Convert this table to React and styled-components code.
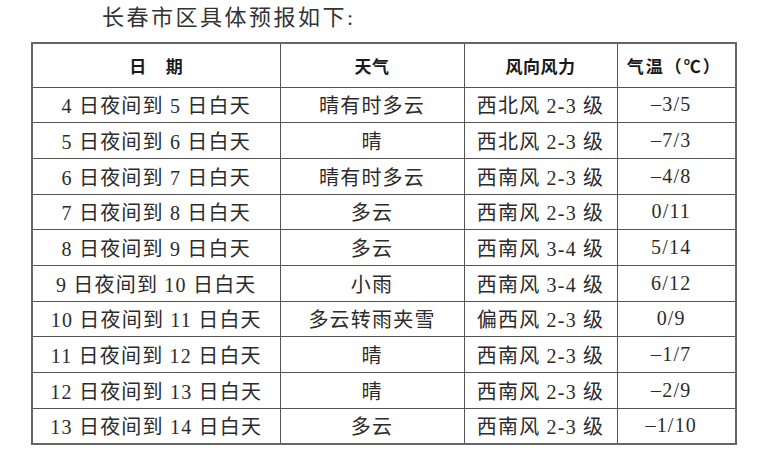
import React from 'react';
import styled, { createGlobalStyle } from 'styled-components';

const GlobalStyle = createGlobalStyle`
  html, body {
    margin: 0;
    padding: 0;
    background: #fff;
  }
  body {
    font-family: "Liberation Serif", "Noto Sans CJK SC", serif;
    color: #2b2b2b;
  }
`

const rows = [
  ['4 日夜间到 5 日白天', '晴有时多云', '西北风 2-3 级', '–3/5'],
  ['5 日夜间到 6 日白天', '晴', '西北风 2-3 级', '–7/3'],
  ['6 日夜间到 7 日白天', '晴有时多云', '西南风 2-3 级', '–4/8'],
  ['7 日夜间到 8 日白天', '多云', '西南风 2-3 级', '0/11'],
  ['8 日夜间到 9 日白天', '多云', '西南风 3-4 级', '5/14'],
  ['9 日夜间到 10 日白天', '小雨', '西南风 3-4 级', '6/12'],
  ['10 日夜间到 11 日白天', '多云转雨夹雪', '偏西风 2-3 级', '0/9'],
  ['11 日夜间到 12 日白天', '晴', '西南风 2-3 级', '–1/7'],
  ['12 日夜间到 13 日白天', '晴', '西南风 2-3 级', '–2/9'],
  ['13 日夜间到 14 日白天', '多云', '西南风 2-3 级', '–1/10'],
];

export default function App() {
  return (
    <Page>
      <GlobalStyle />
      <Title>长春市区具体预报如下:</Title>
      <Forecast>
        <colgroup>
          <col style={{ width: 248 }} />
          <col style={{ width: 184 }} />
          <col style={{ width: 153 }} />
          <col style={{ width: 119 }} />
        </colgroup>
        <thead>
          <HeadRow>
            <HeadCell>日&nbsp;&nbsp;&nbsp;&nbsp;期</HeadCell>
            <HeadCell>天气</HeadCell>
            <HeadCell>风向风力</HeadCell>
            <HeadCell $wide>气温（℃）</HeadCell>
          </HeadRow>
        </thead>
        <tbody>
          {rows.map(r => (
            <Row key={r[0]}>
              <Cell>{r[0]}</Cell>
              <Cell>{r[1]}</Cell>
              <Cell>{r[2]}</Cell>
              <Cell $shift>{r[3]}</Cell>
            </Row>
          ))}
        </tbody>
      </Forecast>
    </Page>
  )
}

const Page = styled.div`
  width: 764px;
  height: 450px;
  padding: 0 0 0 31px;
  box-sizing: border-box;
`
const Title = styled.div`
  height: 42px;
  line-height: 36px;
  padding-left: 71px;
  font-size: 22px;
  letter-spacing: 2.5px;
  color: #333;
`
const Forecast = styled.table`
  width: 704px;
  table-layout: fixed;
  border-collapse: collapse;
  border: 2px solid #666;
`
const HeadRow = styled.tr`
  height: 44px;
`
const Row = styled.tr`
  height: 35.7px;
`
const HeadCell = styled.th`
  border: 1px solid #555;
  padding: 0 ${p => (p.$wide ? '4px' : '0')} 0 0;
  font-size: 17px;
  font-weight: bold;
  letter-spacing: ${p => (p.$wide ? '2px' : '0.5px')};
  text-align: center;
  color: #1a1a1a;
`
const Cell = styled.td`
  border: 1px solid #555;
  padding: 0 ${p => (p.$shift ? '10px' : '0')} 0 0;
  font-size: 20px;
  letter-spacing: 1.2px;
  text-align: center;
  white-space: nowrap;
`
